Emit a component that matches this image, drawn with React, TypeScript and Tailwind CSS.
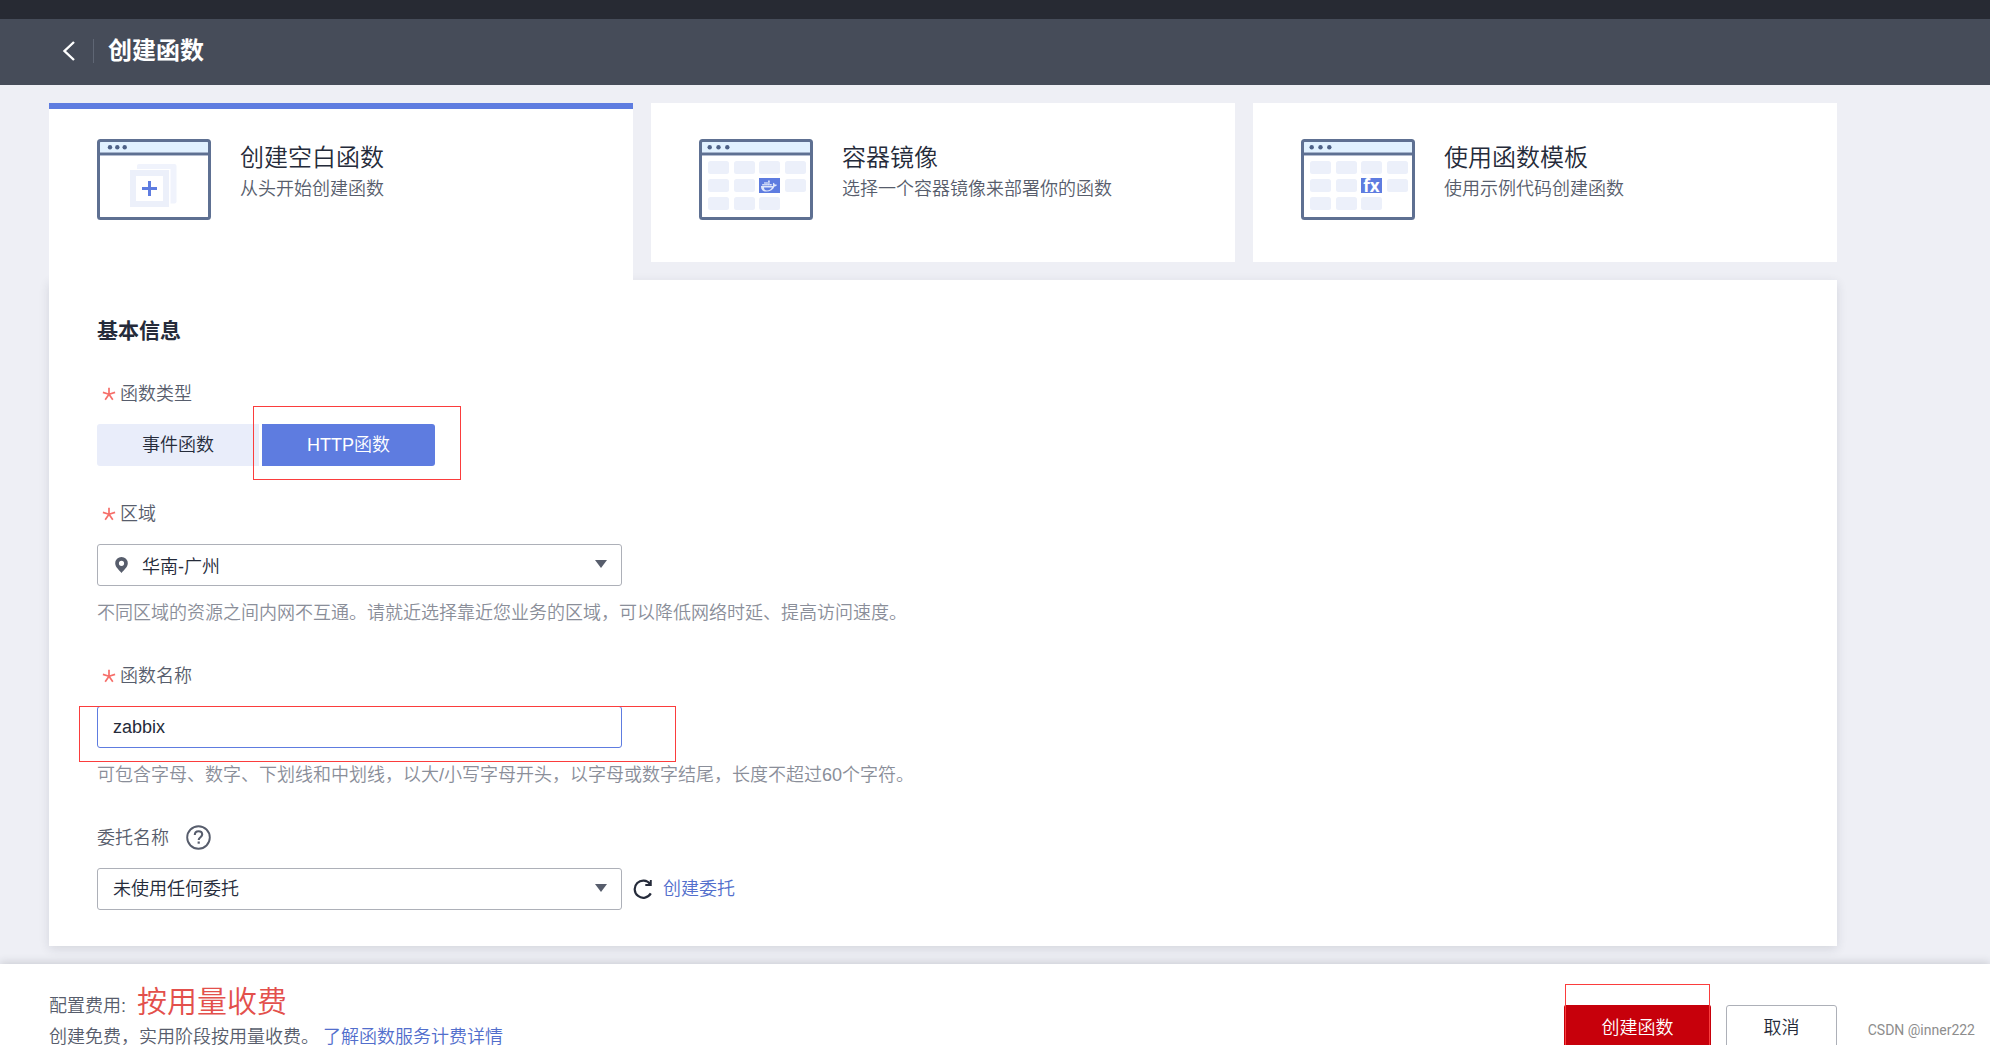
import { useState } from "react"
import type { ReactNode } from "react"
import { FaDocker } from "react-icons/fa"

type Mode = "blank" | "image" | "template"

const WindowFrame = ({ dots, children }: { dots: number[]; children: ReactNode }) => (
  <svg width="114" height="81" viewBox="0 0 114 81" className="shrink-0" aria-hidden="true">
    <rect x="1.5" y="1.5" width="111" height="78" rx="2" fill="#fff" />
    <rect x="3" y="3" width="108" height="11" fill="#e1f1ff" />
    <rect x="2" y="13" width="110" height="1" fill="#a3b2ca" />
    <rect x="2" y="14" width="110" height="2" fill="#5e7092" />
    <rect x="2" y="16" width="110" height="1" fill="#b4bccf" />
    <rect x="1.5" y="1.5" width="111" height="78" rx="2" fill="none" stroke="#5e7092" strokeWidth="3" />
    {dots.map((cx) => (
      <circle key={cx} cx={cx} cy="8.2" r="2.2" fill="#4d6187" />
    ))}
    {children}
  </svg>
)

const tiles = [
  [9, 22], [35, 22], [60, 22], [86, 22],
  [9, 40], [35, 40], [86, 40],
  [9, 58], [35, 58], [60, 58],
]

const TileWindow = ({ children }: { children: ReactNode }) => (
  <WindowFrame dots={[10.7, 19.5, 28.3]}>
    {tiles.map(([x, y]) => (
      <rect key={`${x}-${y}`} x={x} y={y} width="21" height="13" rx="2.5" fill="#ecf0fa" />
    ))}
    <rect x="60" y="39" width="21" height="15" fill="#5e7ce0" />
    {children}
  </WindowFrame>
)

const BlankIcon = () => (
  <WindowFrame dots={[13, 20.3, 27.7]}>
    <rect x="40" y="25" width="39.5" height="39.5" rx="2" fill="#f0f3fc" />
    <rect x="32" y="30" width="41.5" height="38.5" fill="#fff" />
    <rect x="36" y="34" width="33" height="31" fill="#fff" stroke="#ecf0fa" strokeWidth="6" />
    <path d="M45 49.5h15M52.5 42v15" stroke="#5e7ce0" strokeWidth="3" />
  </WindowFrame>
)

const ImageIcon = () => (
  <TileWindow>
    <FaDocker x="62" y="39" width="17" height="15" color="#dfe6fa" />
    <path d="M65 48.500h8c-1 2-3 3-5 3s-3-1-3-3z" fill="#5e7ce0" />
  </TileWindow>
)

const TemplateIcon = () => (
  <TileWindow>
    <text
      x="70.5"
      y="52.5"
      textAnchor="middle"
      fontSize="17"
      fontWeight="700"
      fill="#fff"
      fontFamily="'Open Sans', 'Noto Sans', sans-serif"
    >
      fx
    </text>
  </TileWindow>
)

const modes = [
  { id: "blank" as Mode, title: "创建空白函数", text: "从头开始创建函数", icon: <BlankIcon /> },
  { id: "image" as Mode, title: "容器镜像", text: "选择一个容器镜像来部署你的函数", icon: <ImageIcon /> },
  { id: "template" as Mode, title: "使用函数模板", text: "使用示例代码创建函数", icon: <TemplateIcon /> },
]

const RequiredMark = () => (
  <svg width="14" height="14" viewBox="0 0 14 14" className="ml-[5px] mr-[4px]" aria-hidden="true">
    <path d="M7 7.2V.8M7 7.2L.9 5.4M7 7.2l6.1-1.8M7 7.2l-3.8 5.6M7 7.2l3.8 5.6" stroke="#f66f6a" strokeWidth="1.7" />
  </svg>
)

const Caret = () => (
  <svg
    width="12"
    height="8"
    viewBox="0 0 12 8"
    className="absolute right-[15px] top-[16px] pointer-events-none"
    aria-hidden="true"
  >
    <path d="M0 0h12L6 8z" fill="#575d6c" />
  </svg>
)

const selectClass =
  "block h-[42px] w-full appearance-none rounded-[3px] border border-[#adb0b8] bg-white pr-10 text-[18px] text-[#252b3a] outline-none"

const labelClass = "flex h-7 items-center text-[18px] leading-7 text-[#575d6c]"

export default function App() {
  const [mode, setMode] = useState<Mode>("blank")
  const [kind, setKind] = useState("http")
  const [name, setName] = useState("zabbix")

  return (
    <div className="flex h-screen flex-col overflow-hidden bg-[#eeeff5] font-['Liberation_Sans','Noto_Sans_CJK_SC',sans-serif] font-[350] text-[#252b3a]">
      <div className="h-[19px] shrink-0 bg-[#272a33]" />
      <header className="flex h-[66px] shrink-0 items-center bg-[#464c59] pb-[2px] pl-[62px] text-white">
        <button type="button" aria-label="返回">
          <svg width="14" height="20" viewBox="0 0 14 20" fill="none">
            <path d="M12 1L2.5 10l9.5 9" stroke="#fff" strokeWidth="2.4" />
          </svg>
        </button>
        <span className="ml-[17px] h-6 w-px bg-[#5f6674]" />
        <h1 className="ml-[14px] text-[24px] font-bold leading-8">创建函数</h1>
      </header>

      <main className="shrink-0 pb-[18px] pl-[49px] pr-[153px] pt-[18px]">
        <div className="grid grid-cols-3 gap-x-[18px]">
          {modes.map((m) => (
            <button
              key={m.id}
              type="button"
              onClick={() => setMode(m.id)}
              aria-pressed={mode === m.id}
              className={`flex items-start bg-white pl-12 text-left ${
                mode === m.id
                  ? "relative z-10 h-[177px] border-t-[6px] border-[#5e7ce0] pt-[30px]"
                  : "h-[159px] pt-9"
              }`}
            >
              {m.icon}
              <span className="ml-[29px] flex flex-col pt-px">
                <span className="text-[24px] leading-9 text-[#252b3a]">{m.title}</span>
                <span className="text-[18px] leading-[26px] text-[#575d6c]">{m.text}</span>
              </span>
            </button>
          ))}
        </div>

        <section className="bg-white px-12 pb-9 pt-[35px] shadow-[0_3px_10px_rgba(37,43,58,0.12)]">
          <h2 className="text-[21px] font-bold leading-8">基本信息</h2>

          <div className="mt-[33px]">
            <div className={labelClass} id="kind-label">
              <RequiredMark />
              函数类型
            </div>
            <div className="mt-4 flex gap-[3px]" role="group" aria-labelledby="kind-label">
              <button
                type="button"
                onClick={() => setKind("event")}
                className={`h-[42px] w-[162px] rounded-l-[3px] text-[18px] ${
                  kind === "event" ? "bg-[#5e7ce0] text-white" : "bg-[#e9edfa] text-[#252b3a]"
                }`}
              >
                事件函数
              </button>
              <div className="relative">
                <button
                  type="button"
                  onClick={() => setKind("http")}
                  className={`h-[42px] w-[173px] rounded-r-[3px] text-[18px] ${
                    kind === "http" ? "bg-[#5e7ce0] text-white" : "bg-[#e9edfa] text-[#252b3a]"
                  }`}
                >
                  HTTP函数
                </button>
                <span className="pointer-events-none absolute -left-[9px] -top-[18px] h-[74px] w-[208px] border border-[#fb3d3d]" />
              </div>
            </div>
          </div>

          <div className="mt-[34px]">
            <label className={labelClass} htmlFor="region">
              <RequiredMark />
              区域
            </label>
            <div className="relative mt-4 max-w-[525px]">
              <svg
                width="13"
                height="16"
                viewBox="0 0 13 16"
                className="pointer-events-none absolute left-[18px] top-[13px]"
                aria-hidden="true"
              >
                <path
                  d="M6.5 0A6.3 6.3 0 0 0 .2 6.3C.2 10 4 13 6.5 16 9 13 12.800 10 12.800 6.300A6.300 6.300 0 0 0 6.500 0zm0 3.700a2.600 2.600 0 1 1 0 5.200 2.600 2.600 0 0 1 0-5.200z"
                  fill="#575d6c"
                />
              </svg>
              <select id="region" className={`${selectClass} pl-11 pt-[4px]`}>
                <option>华南-广州</option>
              </select>
              <Caret />
            </div>
            <p className="mt-[13px] text-[18px] leading-7 text-[#8a8e99]">
              不同区域的资源之间内网不互通。请就近选择靠近您业务的区域，可以降低网络时延、提高访问速度。
            </p>
          </div>

          <div className="mt-[35px]">
            <label className={labelClass} htmlFor="name">
              <RequiredMark />
              函数名称
            </label>
            <div className="relative mt-4 max-w-[525px]">
              <input
                id="name"
                type="text"
                value={name}
                onChange={(e) => setName(e.target.value)}
                className="block h-[42px] w-full rounded-[3px] border border-[#5e7ce0] bg-white px-[15px] text-[18px] text-[#252b3a] outline-none"
              />
              <span className="pointer-events-none absolute -left-[18px] top-0 h-[56px] w-[597px] border border-[#fb3d3d]" />
            </div>
            <p className="mt-[13px] text-[18px] leading-7 text-[#8a8e99]">
              可包含字母、数字、下划线和中划线，以大/小写字母开头，以字母或数字结尾，长度不超过60个字符。
            </p>
          </div>

          <div className="mt-[35px]">
            <div className="flex items-start">
              <label className={labelClass} htmlFor="agency">
                委托名称
              </label>
              <button type="button" aria-label="帮助" className="ml-[17px] pt-px">
                <svg width="25" height="25" viewBox="0 0 25 25" fill="none" stroke="#575d6c">
                  <circle cx="12.500" cy="12.500" r="11.300" strokeWidth="1.900" />
                  <path d="M8.800 10c0-2.300 1.500-3.700 3.700-3.700s3.700 1.300 3.700 3.300c0 2.600-3.500 2.700-3.500 5.400" strokeWidth="2.100" />
                  <path d="M11.600 17.600h2.200" strokeWidth="2.200" />
                </svg>
              </button>
            </div>
            <div className="mt-4 flex items-center">
              <div className="relative w-full max-w-[525px]">
                <select id="agency" className={`${selectClass} pl-[15px]`}>
                  <option>未使用任何委托</option>
                </select>
                <Caret />
              </div>
              <button type="button" aria-label="刷新" className="ml-[11px] shrink-0">
                <svg width="20" height="20" viewBox="0 0 20 20" fill="none" stroke="#252b3a">
                  <path d="M17.800 14.400A8.600 8.600 0 1 1 17.200 5" strokeWidth="2.200" />
                  <path d="M17.800 1v5h-5.500" strokeWidth="1.900" />
                </svg>
              </button>
              <a href="#agency" className="ml-[10px] shrink-0 text-[18px] leading-7 text-[#526ecc]">
                创建委托
              </a>
            </div>
          </div>
        </section>
      </main>

      <footer className="relative flex shrink-0 items-start bg-white pb-5 pl-[49px] pr-[153px] pt-[18px] shadow-[0_-2px_8px_rgba(37,43,58,0.16)]">
        <div className="text-[18px] text-[#575d6c]">
          <p className="flex items-baseline leading-10">
            配置费用:
            <span className="ml-[11px] text-[30px] text-[#e3504c]">按用量收费</span>
          </p>
          <p className="leading-[22px]">
            创建免费，实用阶段按用量收费。
            <a href="#pricing" className="ml-1 text-[#526ecc]">
              了解函数服务计费详情
            </a>
          </p>
        </div>
        <div className="ml-auto mt-[23px] flex gap-[15px]">
          <div className="relative">
            <button type="button" className="h-[46px] w-[147px] rounded-[2px] bg-[#c7000b] text-[18px] text-white">
              创建函数
            </button>
            <span className="pointer-events-none absolute -top-[21px] left-px h-[68px] w-[145px] border border-[#fb3d3d]" />
          </div>
          <button
            type="button"
            className="h-[46px] w-[111px] rounded-[3px] border border-[#adb0b8] bg-white text-[18px] text-[#252b3a]"
          >
            取消
          </button>
        </div>
        <span className="absolute right-[15px] top-[56px] font-['Roboto','Liberation_Sans',sans-serif] text-[14px] font-normal leading-5 text-[#8d8d8d]">
          CSDN @inner222
        </span>
      </footer>
    </div>
  )
}
